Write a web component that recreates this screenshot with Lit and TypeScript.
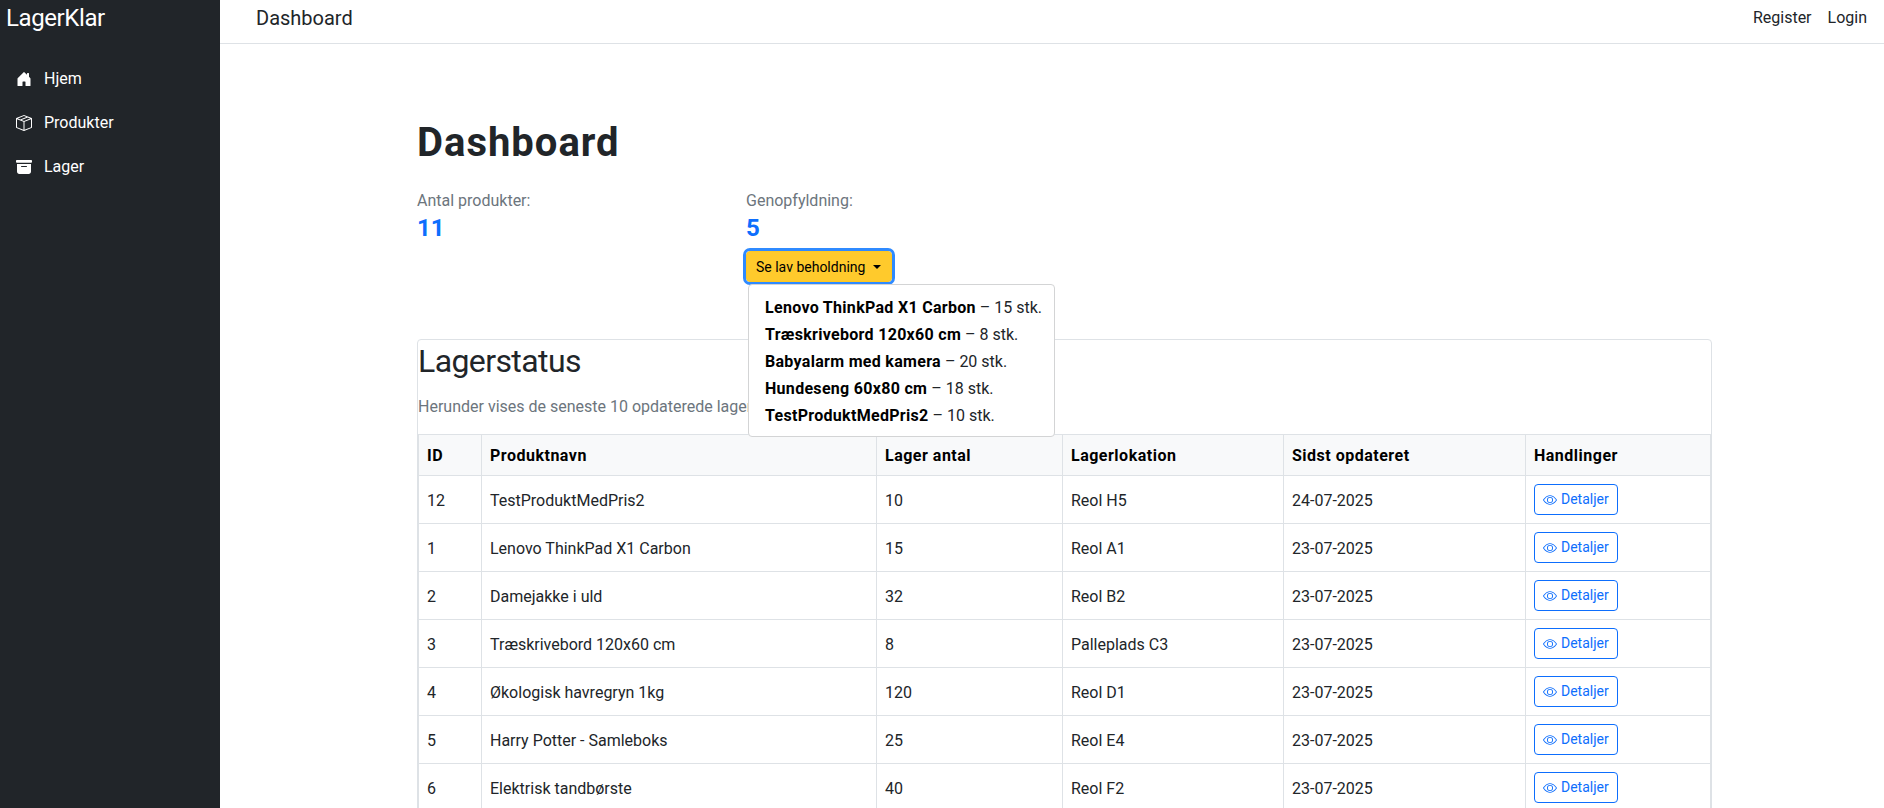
import { LitElement, css, html, svg } from "lit";
import { customElement } from "lit/decorators.js";

const low = [
  ["Lenovo ThinkPad X1 Carbon", 15],
  ["Træskrivebord 120x60 cm", 8],
  ["Babyalarm med kamera", 20],
  ["Hundeseng 60x80 cm", 18],
  ["TestProduktMedPris2", 10],
];

const rows = [
  [12, "TestProduktMedPris2", 10, "Reol H5", "24-07-2025"],
  [1, "Lenovo ThinkPad X1 Carbon", 15, "Reol A1", "23-07-2025"],
  [2, "Damejakke i uld", 32, "Reol B2", "23-07-2025"],
  [3, "Træskrivebord 120x60 cm", 8, "Palleplads C3", "23-07-2025"],
  [4, "Økologisk havregryn 1kg", 120, "Reol D1", "23-07-2025"],
  [5, "Harry Potter - Samleboks", 25, "Reol E4", "23-07-2025"],
  [6, "Elektrisk tandbørste", 40, "Reol F2", "23-07-2025"],
];

const icon = (body: unknown) =>
  html`<svg class="bi" viewBox="0 0 16 16" fill="currentColor">${body}</svg>`;

const houseIcon = icon(svg`
  <path d="M6.5 14.5v-3.505c0-.245.25-.495.5-.495h2c.25 0 .5.25.5.5v3.5a.5.5 0 0 0 .5.5h4a.5.5 0 0 0 .5-.5v-7a.5.5 0 0 0-.146-.354L13 5.793V2.5a.5.5 0 0 0-.5-.5h-1a.5.5 0 0 0-.5.5v1.293L8.354 1.146a.5.5 0 0 0-.708 0l-6 6A.5.5 0 0 0 1.5 7.5v7a.5.5 0 0 0 .5.5h4a.5.5 0 0 0 .5-.5z"/>`);

const boxIcon = icon(svg`
  <path d="M8.186 1.113a.5.5 0 0 0-.372 0L1.846 3.5l2.404.961L10.404 2l-2.218-.887zm3.564 1.426L5.596 5 8 5.961 14.154 3.5l-2.404-.961zm3.25 1.7-6.5 2.6v7.922l6.5-2.6V4.24zM7.5 14.762V6.838L1 4.239v7.923l6.5 2.6zM7.443.184a1.5 1.5 0 0 1 1.114 0l7.129 2.852A.5.5 0 0 1 16 3.5v8.662a1 1 0 0 1-.629.928l-7.185 2.874a.5.5 0 0 1-.372 0L.63 13.09a1 1 0 0 1-.63-.928V3.5a.5.5 0 0 1 .314-.464L7.443.184z"/>`);

const archiveIcon = icon(svg`
  <path d="M12.643 15C13.979 15 15 13.845 15 12.5V5H1v7.5C1 13.845 2.021 15 3.357 15h9.286zM5.5 7h5a.5.5 0 0 1 0 1h-5a.5.5 0 0 1 0-1zM.8 1a.8.8 0 0 0-.8.8V3a.8.8 0 0 0 .8.8h14.4A.8.8 0 0 0 16 3V1.8a.8.8 0 0 0-.8-.8H.8z"/>`);

const eyeIcon = icon(svg`
  <path d="M16 8s-3-5.5-8-5.5S0 8 0 8s3 5.5 8 5.5S16 8 16 8zM1.173 8a13.133 13.133 0 0 1 1.66-2.043C4.12 4.668 5.88 3.5 8 3.5c2.12 0 3.879 1.168 5.168 2.457A13.133 13.133 0 0 1 14.828 8c-.058.087-.122.183-.195.288-.335.48-.83 1.12-1.465 1.755C11.879 11.332 10.119 12.5 8 12.5c-2.12 0-3.879-1.168-5.168-2.457A13.134 13.134 0 0 1 1.172 8z"/>
  <path d="M8 5.5a2.5 2.5 0 1 0 0 5 2.5 2.5 0 0 0 0-5zM4.5 8a3.5 3.5 0 1 1 7 0 3.5 3.5 0 0 1-7 0z"/>`);

@customElement("app-root")
export class AppRoot extends LitElement {
  static styles = css`
    * {
      box-sizing: border-box;
      margin: 0;
      padding: 0;
    }

    :host {
      display: block;
      height: 100vh;
      overflow: hidden;
      font-family: Roboto, "Open Sans", sans-serif;
      font-size: 16px;
      line-height: 1.5;
      color: #212529;
      background: #fff;
    }

    .shell {
      display: flex;
      height: 100vh;
    }

    .side {
      flex: 0 0 220px;
      background: #212529;
      color: #fff;
    }

    .brand {
      display: block;
      padding: 0 6px;
      font-size: 24px;
      line-height: 36px;
      letter-spacing: -0.4px;
    }

    .side nav {
      display: flex;
      flex-direction: column;
      padding-top: 21px;
    }

    .side a {
      display: flex;
      align-items: center;
      gap: 12px;
      height: 44px;
      padding: 0 16px;
    }

    .side .bi {
      width: 16px;
      height: 16px;
    }

    .main {
      flex: 1;
      min-width: 0;
    }

    .top {
      display: flex;
      align-items: center;
      justify-content: space-between;
      height: 44px;
      padding: 0 17px 8px 36px;
      border-bottom: 1px solid #dee2e6;
    }

    .top .title {
      font-size: 20px;
    }

    .top .links {
      display: flex;
      gap: 16px;
    }

    .content {
      padding: 75px 172px 0 197px;
    }

    h1 {
      font-size: 40px;
      font-weight: 700;
      line-height: 48px;
      letter-spacing: 1px;
    }

    .stats {
      display: flex;
      margin-top: 22px;
      height: 150px;
    }

    .stat {
      flex: 0 0 329px;
    }

    .stat label {
      display: block;
      color: #6c757d;
    }

    .stat strong {
      display: block;
      font-size: 24px;
      line-height: 30px;
      color: #0d6efd;
    }

    .drop {
      position: relative;
      margin-top: 8px;
    }

    .toggle {
      display: flex;
      align-items: center;
      width: 146px;
      height: 31px;
      padding: 2px 9px 0;
      font: inherit;
      font-size: 14px;
      line-height: 21px;
      color: #000;
      background: #ffca2c;
      border: 1px solid #ffc720;
      border-radius: 4px;
      outline: 3px solid #2f8aff;
      outline-offset: 0;
    }

    .caret {
      width: 0;
      height: 0;
      margin-left: 8px;
      margin-top: -2px;
      border-top: 4px solid #000;
      border-left: 4px solid transparent;
      border-right: 4px solid transparent;
    }

    .menu {
      position: absolute;
      left: 2px;
      top: 33px;
      width: 307px;
      padding: 9px 16px 7px;
      line-height: 27px;
      background: #fff;
      border: 1px solid #d3d4d5;
      border-radius: 4px;
      z-index: 2;
    }

    .menu div {
      white-space: nowrap;
    }

    .menu b {
      color: #000;
      letter-spacing: 0.3px;
    }

    .card {
      border: 1px solid #dee2e6;
      border-radius: 4px;
    }

    h2 {
      font-size: 32px;
      font-weight: 400;
      line-height: 43px;
      letter-spacing: -0.6px;
      margin-bottom: 12px;
    }

    .card p {
      color: #6c757d;
      margin-bottom: 15px;
    }

    table {
      width: 100%;
      border-collapse: collapse;
      table-layout: fixed;
    }

    th,
    td {
      padding: 9px 8px 7px;
      border: 1px solid #dee2e6;
      text-align: left;
      vertical-align: middle;
    }

    th {
      height: 41px;
      background: #f8f9fa;
      font-weight: 700;
      letter-spacing: 0.5px;
      color: #000;
    }

    td {
      height: 48px;
    }

    .btn {
      display: inline-flex;
      align-items: center;
      gap: 4px;
      height: 31px;
      padding: 0 8px;
      font: inherit;
      font-size: 14px;
      color: #0d6efd;
      background: #fff;
      border: 1px solid #0d6efd;
      border-radius: 4px;
      transform: translateY(-1px);
    }

    .btn .bi {
      width: 14px;
      height: 14px;
    }
  `;

  render() {
    return html`
      <div class="shell">
        <aside class="side">
          <span class="brand">LagerKlar</span>
          <nav>
            <a>${houseIcon}Hjem</a>
            <a>${boxIcon}Produkter</a>
            <a>${archiveIcon}Lager</a>
          </nav>
        </aside>
        <div class="main">
          <header class="top">
            <span class="title">Dashboard</span>
            <div class="links"><a>Register</a><a>Login</a></div>
          </header>
          <div class="content">
            <h1>Dashboard</h1>
            <div class="stats">
              <div class="stat">
                <label>Antal produkter:</label>
                <strong>11</strong>
              </div>
              <div class="stat">
                <label>Genopfyldning:</label>
                <strong>5</strong>
                <div class="drop">
                  <button class="toggle">Se lav beholdning<span class="caret"></span></button>
                  <div class="menu">
                    ${low.map(([name, n]) => html`<div><b>${name}</b> – ${n} stk.</div>`)}
                  </div>
                </div>
              </div>
            </div>
            <section class="card">
              <h2>Lagerstatus</h2>
              <p>Herunder vises de seneste 10 opdaterede lagerbeholdninger</p>
              <table>
                <colgroup>
                  <col style="width:63px" />
                  <col style="width:395px" />
                  <col style="width:186px" />
                  <col style="width:221px" />
                  <col style="width:242px" />
                  <col />
                </colgroup>
                <thead>
                  <tr>
                    <th>ID</th>
                    <th>Produktnavn</th>
                    <th>Lager antal</th>
                    <th>Lagerlokation</th>
                    <th>Sidst opdateret</th>
                    <th>Handlinger</th>
                  </tr>
                </thead>
                <tbody>
                  ${rows.map(
                    (r) => html`<tr>
                      ${r.map((c) => html`<td>${c}</td>`)}
                      <td><button class="btn">${eyeIcon}Detaljer</button></td>
                    </tr>`
                  )}
                </tbody>
              </table>
            </section>
          </div>
        </div>
      </div>
    `;
  }
}
